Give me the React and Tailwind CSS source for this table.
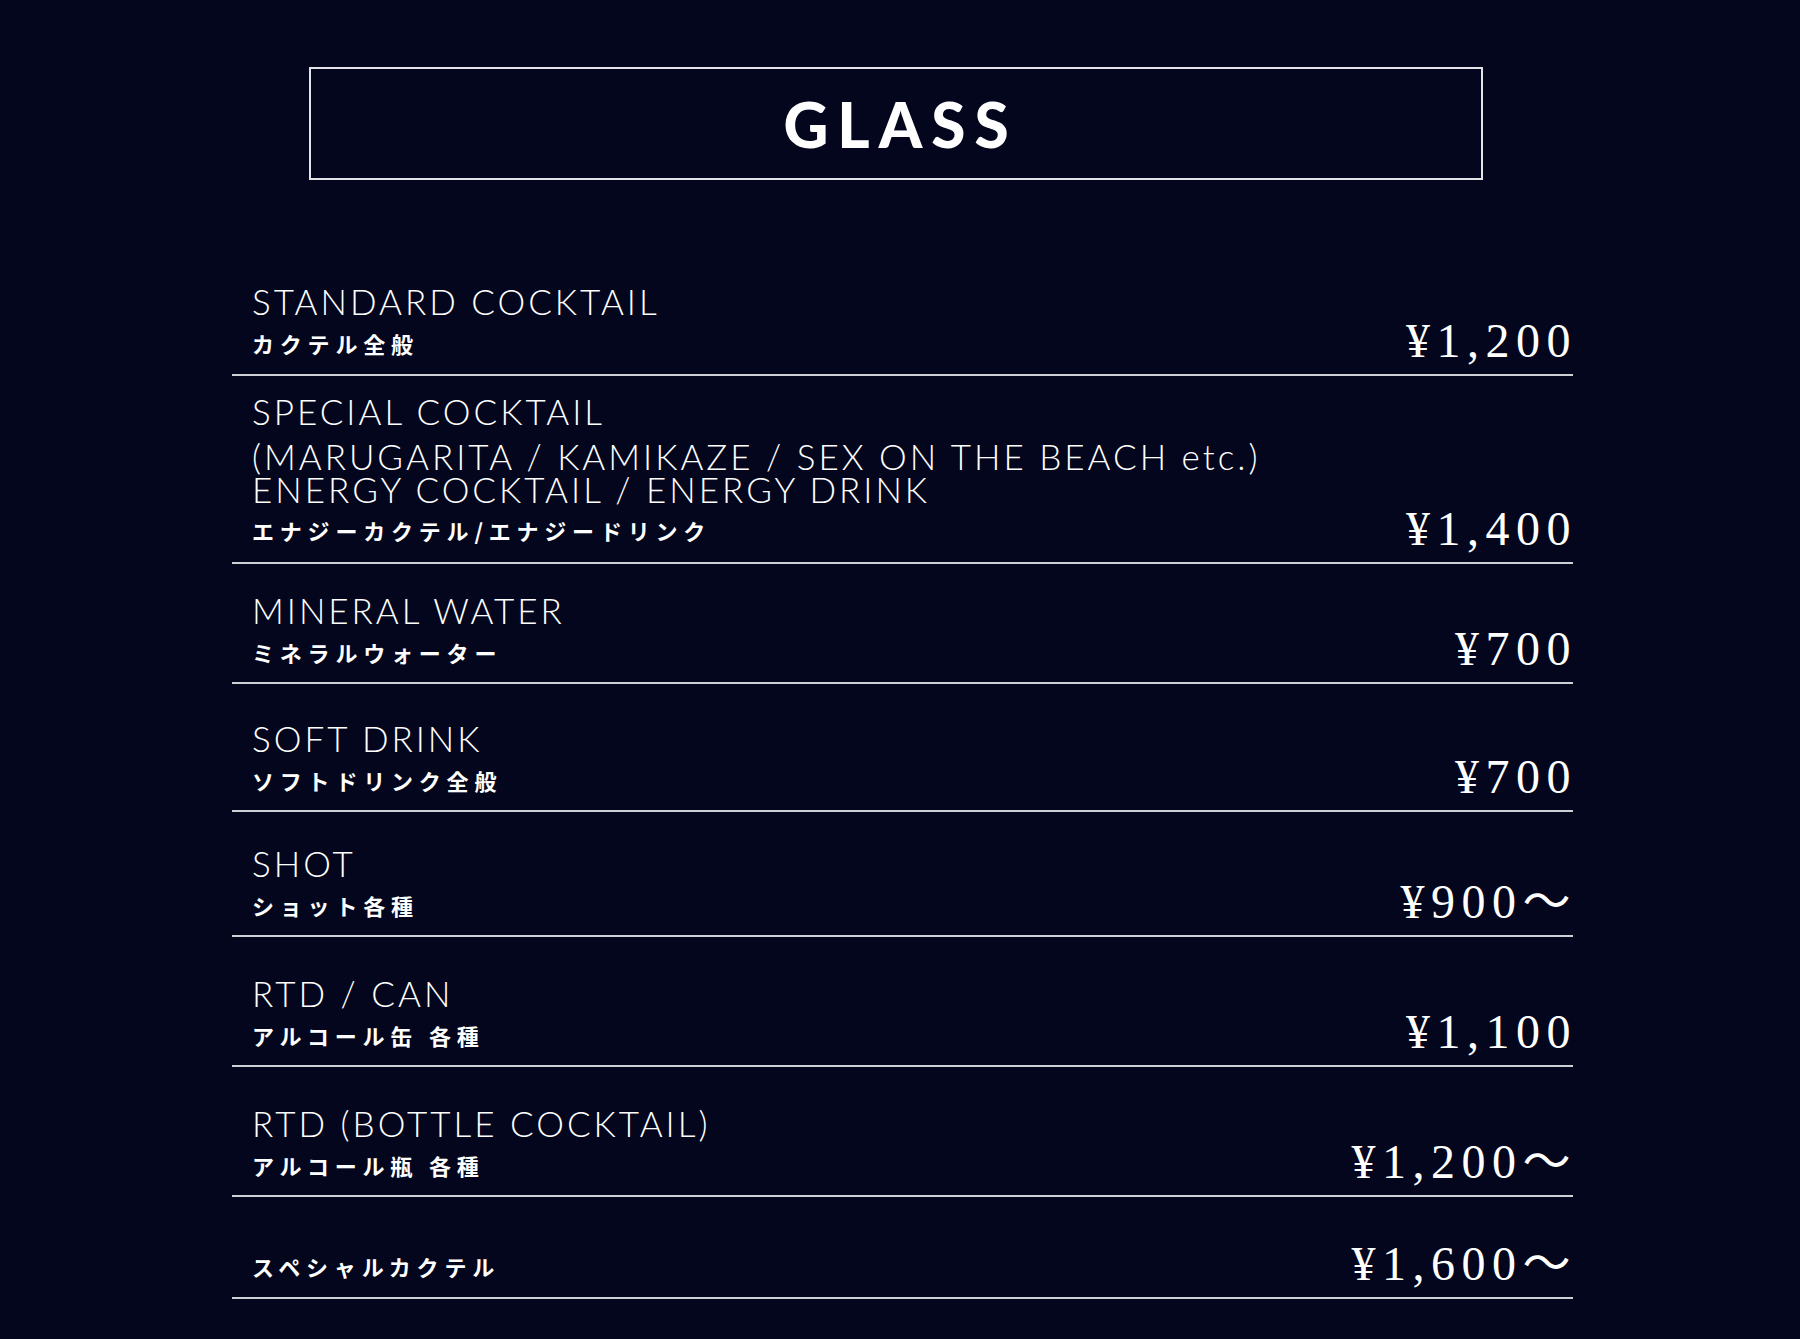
const EN = "font-['Lato','Liberation_Sans',sans-serif] font-light text-white";
const JP = "font-['Noto_Sans_CJK_JP',sans-serif] font-bold text-white";
const PRICE = "font-['Liberation_Serif','Noto_Sans_CJK_JP',serif] text-white";

const items = [
  { h: "h-[120px]", pb: "pb-[20px]", en: ["STANDARD COCKTAIL"], jp: "カクテル全般", price: "¥1,200" },
  {
    h: "h-[188px]",
    pb: "pb-[21px]",
    en: ["SPECIAL COCKTAIL"],
    sub: ["(MARUGARITA / KAMIKAZE / SEX ON THE BEACH etc.)", "ENERGY COCKTAIL / ENERGY DRINK"],
    jp: "エナジーカクテル/エナジードリンク",
    price: "¥1,400",
  },
  { h: "h-[120px]", pb: "pb-[19px]", en: ["MINERAL WATER"], jp: "ミネラルウォーター", price: "¥700" },
  { h: "h-[128px]", pb: "pb-[19px]", en: ["SOFT DRINK"], jp: "ソフトドリンク全般", price: "¥700" },
  { h: "h-[125px]", pb: "pb-[19px]", en: ["SHOT"], jp: "ショット各種", price: "¥900〜" },
  { h: "h-[130px]", pb: "pb-[19px]", en: ["RTD / CAN"], jp: "アルコール缶 各種", price: "¥1,100" },
  { h: "h-[130px]", pb: "pb-[19px]", en: ["RTD (BOTTLE COCKTAIL)"], jp: "アルコール瓶 各種", price: "¥1,200〜" },
  { h: "h-[102px]", pb: "pb-[20px]", en: [], jp: "スペシャルカクテル", price: "¥1,600〜" },
];

function Row({ item }) {
  return (
    <div className={`${item.h} flex items-end justify-between border-b-2 border-[#cfd0d6] pl-[20px]`}>
      <div className={`flex flex-col ${item.pb}`}>
        {item.en.map((t) => (
          <p key={t} className={`${EN} text-[35px] leading-[35px] tracking-[3px] whitespace-nowrap`}>
            {t}
          </p>
        ))}
        {item.sub && (
          <div className="mt-[11px]">
            {item.sub.map((t) => (
              <p key={t} className={`${EN} text-[35px] leading-[33px] tracking-[3px] whitespace-nowrap`}>
                {t}
              </p>
            ))}
          </div>
        )}
        <p className={`${JP} mt-[13px] text-[22px] leading-[22px] tracking-[5.8px] whitespace-nowrap`}>
          {item.jp}
        </p>
      </div>
      <p className={`${PRICE} pb-[9px] text-[48px] leading-[48px] tracking-[6.5px] mr-[-4px] whitespace-nowrap`}>
        {item.price}
      </p>
    </div>
  );
}

export default function App() {
  return (
    <div className="min-h-[1339px] w-full bg-[#03061c] pt-[67px] pb-[39px]">
      <div className="ml-[309px] flex h-[113px] w-[1174px] items-center justify-center border-2 border-[#e4e4e8]">
        <h1 className="font-['Lato','Liberation_Sans',sans-serif] text-[62px] font-black leading-none tracking-[9px] text-white mr-[-9px]">
          GLASS
        </h1>
      </div>
      <div className="ml-[232px] mt-[76px] w-[1341px]">
        {items.map((item, i) => (
          <Row key={i} item={item} />
        ))}
      </div>
    </div>
  );
}
